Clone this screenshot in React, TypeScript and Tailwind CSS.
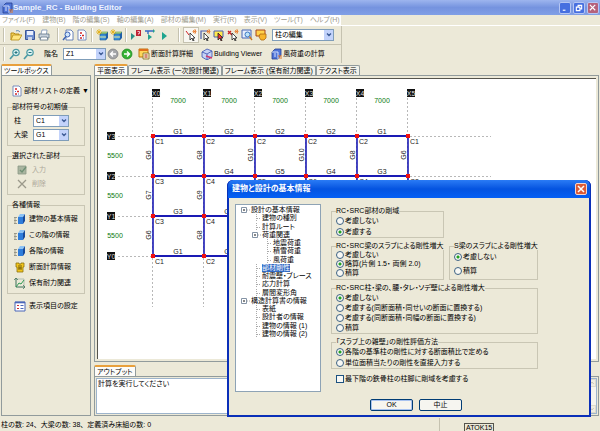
import React from "react";
import clsx from "clsx";

const menus = [
  "ファイル(F)",
  "建物(B)",
  "階の編集(S)",
  "軸の編集(A)",
  "部材の編集(M)",
  "実行(R)",
  "表示(V)",
  "ツール(T)",
  "ヘルプ(H)",
];

const tree = [
  { label: "設計の基本情報", depth: 0, open: true },
  { label: "建物の種別", depth: 1 },
  { label: "計算ルート", depth: 1 },
  { label: "荷重関連", depth: 1, open: true },
  { label: "地震荷重", depth: 2 },
  { label: "積雪荷重", depth: 2 },
  { label: "風荷重", depth: 2 },
  { label: "部材剛性", depth: 1, selected: true },
  { label: "耐震壁・ブレース", depth: 1 },
  { label: "応力計算", depth: 1 },
  { label: "層間変形角", depth: 1 },
  { label: "構造計算書の情報", depth: 0, open: true },
  { label: "表紙", depth: 1 },
  { label: "設計者の情報", depth: 1 },
  { label: "建物の情報 (1)", depth: 1 },
  { label: "建物の情報 (2)", depth: 1 },
];

const xs = [55, 106, 157, 208, 259, 310];
const ys = [57, 97, 137, 177];
const beams = [
  ["G1", "G2", "G2", "G2", "G1"],
  ["G3", "G4", "G5", "G4", "G3"],
  ["G3", "G4", "G5", "G4", "G3"],
  ["G1", "G2", "G2", "G2", "G1"],
];
const sideBeams = [
  ["G6", "G8", "G10", "G10", "G8", "G6"],
  ["G7", "G9", "G11", "G11", "G9", "G7"],
  ["G6", "G8", "G10", "G10", "G8", "G6"],
];
const columns = [
  ["C1", "C2", "C2", "C2", "C2", "C1"],
  ["C3", "C4", "C5", "C6", "C4", "C3"],
  ["C3", "C4", "C5", "C6", "C4", "C3"],
  ["C1", "C2", "C2", "C2", "C2", "C1"],
];

function Icon({ children }: { children: React.ReactNode }) {
  return (
    <svg viewBox="0 0 12 12" className="h-3 w-3 shrink-0" fill="none" aria-hidden="true">
      {children}
    </svg>
  );
}

const OpenIcon = () => (
  <Icon>
    <path d="M1 11V4h3l1 1h4v2" fill="#f4d35a" stroke="#b58a14" />
    <path d="M1 11l2-5h9l-3 5z" fill="#ffe680" stroke="#b58a14" strokeWidth=".8" />
    <path d="M6 2c2-1 3 0 4 1" stroke="#5a86b8" />
  </Icon>
);
const SaveIcon = () => (
  <Icon>
    <path d="M1.500 1.500h8l1 1v8h-9z" fill="#6f8fd0" stroke="#3b5698" />
    <path d="M3 2h6v4H3z" fill="#e8eefc" />
    <path d="M4 8h4v3H4z" fill="#cdd6e8" />
  </Icon>
);
const PrintIcon = () => (
  <Icon>
    <path d="M3 5l1-4h5l-.5 4" fill="#fff" stroke="#7690b4" strokeWidth=".8" />
    <path d="M1 5h10v4H1z" fill="#c8d2dc" stroke="#5f7487" strokeWidth=".8" />
    <path d="M3 8h6l1 3H2z" fill="#fff" stroke="#5f7487" strokeWidth=".8" />
  </Icon>
);
const PreviewIcon = () => (
  <Icon>
    <path d="M4 1h5l2 2v8H4z" fill="#fff" stroke="#4668ac" strokeWidth=".8" />
    <circle cx="5.500" cy="5.500" r="2.500" fill="#cfe5fb" stroke="#3b62b4" />
    <path d="M4 7.500L1 11" stroke="#3b62b4" strokeWidth="1.400" />
  </Icon>
);
const ListIcon = () => (
  <Icon>
    <path d="M2 1h6l2 2v8H2z" fill="#fff" stroke="#5c74b4" strokeWidth=".8" />
    <path d="M4 4h2M6 6.500h2M4 9h2" stroke="#d42a2a" strokeWidth="1.300" />
    <path d="M4 6.500h1M7 9h1" stroke="#4466c4" />
  </Icon>
);
const FloorsIcon = () => (
  <Icon>
    <path d="M4 5l2-2h6l-2 2z" fill="#b7e28a" stroke="#3b7a2a" strokeWidth=".5" />
    <path d="M4 5h6v6H4z" fill="#3b8fd8" stroke="#1d5a9c" strokeWidth=".6" />
    <path d="M10 5l2-2v6l-2 2z" fill="#1e5fa8" />
    <path d="M4 8h6" stroke="#e9f2a0" />
    <path d="M3 0v6M0 3h6M1 1l4 4M5 1L1 5" stroke="#e2ad10" strokeWidth=".8" />
  </Icon>
);
const RunStopIcon = () => (
  <Icon>
    <path d="M1 4l4 3-4 4z" fill="#2b8f86" />
    <path d="M6 1h5v6H6z" fill="#c02436" />
    <path d="M7.500 2.500h2v2h-1v1" stroke="#fff" strokeWidth=".7" />
  </Icon>
);
const RunStepIcon = () => (
  <Icon>
    <path d="M1 2h9M4 2v3" stroke="#3567c4" strokeWidth="1.400" />
    <path d="M9 0l2 2-2 2M4 5l4 3-4 3z" fill="#23a08e" />
  </Icon>
);
const RunIcon = () => (
  <Icon>
    <path d="M4 3l5 4-5 4z" fill="#1fa58f" />
  </Icon>
);
const Pointer = () => (
  <path d="M5 4v7l2-2 1 3h1l-1-3h2z" fill="#fff" stroke="#222" strokeWidth=".8" />
);
const Spark = () => <path d="M10 0v5M7.500 2.500h4M8 1l3 3M11 1L8 4" stroke="#e8792c" strokeWidth=".8" />;
const PickIcon = () => (
  <Icon>
    <path d="M1 2l3 4" stroke="#d02020" />
    <Pointer />
    <Spark />
  </Icon>
);
const PickFrameIcon = () => (
  <Icon>
    <path d="M2 10V2h7" stroke="#4a5fb0" strokeWidth="1.200" />
    <Pointer />
    <Spark />
  </Icon>
);
const PickBoxIcon = () => (
  <Icon>
    <path d="M1 2h9v6H1z" fill="#ffe94d" stroke="#4a5fb0" />
    <path d="M5 4v7l2-2 1 3h1l-1-3h2z" fill="#e33" stroke="#222" strokeWidth=".8" />
  </Icon>
);
const PickCrossIcon = () => (
  <Icon>
    <path d="M1 2l4 4M1 5l3-3" stroke="#c22" strokeWidth="1.300" />
    <Pointer />
    <Spark />
  </Icon>
);
const FrameZoomIcon = () => (
  <Icon>
    <path d="M1 1h9v8H1z" fill="#e8eefc" stroke="#4867b5" />
    <circle cx="6.500" cy="5.500" r="2.500" fill="#bfe3f7" stroke="#3b76c4" />
    <path d="M8.500 7.500L11 11" stroke="#c7781f" strokeWidth="1.300" />
  </Icon>
);
const FrameHandIcon = () => (
  <Icon>
    <path d="M1 1h9v6H1z" fill="#ffd24a" stroke="#a8451f" />
    <path d="M5 5h6v4l-2 2H6L4 8z" fill="#f7b52a" stroke="#b06a10" strokeWidth=".8" />
  </Icon>
);
const ZoomIcon = ({ plus }: { plus?: boolean }) => (
  <Icon>
    <circle cx="7" cy="4.500" r="3.200" fill="#dff3f3" stroke="#4b9aa4" strokeWidth="1.200" />
    <path d="M4.500 7L1 11" stroke="#4b9aa4" strokeWidth="1.600" />
    <path d={plus ? "M5.500 4.500h3M7 3v3" : "M5.500 4.500h3"} stroke="#24757f" />
  </Icon>
);
const BackIcon = () => (
  <Icon>
    <circle cx="6" cy="6" r="5" fill="#a4a6a8" stroke="#77797c" strokeWidth=".7" />
    <path d="M9 6H4M6 3.500L3.500 6 6 8.500" stroke="#fff" strokeWidth="1.400" />
  </Icon>
);
const NextIcon = () => (
  <Icon>
    <circle cx="6" cy="6" r="5" fill="#34b233" stroke="#17811d" strokeWidth=".7" />
    <path d="M3 6h5M6 3.500L8.500 6 6 8.500" stroke="#fff" strokeWidth="1.400" />
  </Icon>
);
const SectionIcon = () => (
  <Icon>
    <path d="M1 1h9v8H1z" fill="#ffd75a" stroke="#bd7512" />
    <path d="M1 2h9" stroke="#e0701b" strokeWidth="2" />
    <path d="M5 5h6v6H5z" fill="#f6efc8" stroke="#7e6a20" strokeWidth=".8" />
    <path d="M6.500 7h3M6.500 9h3" stroke="#b62626" />
  </Icon>
);
const ViewerIcon = () => (
  <Icon>
    <path d="M1 4l5-3 5 2v6l-5 3-5-3z" fill="#c7d3f5" stroke="#3a51b0" strokeWidth=".8" />
    <path d="M1 4l5 2 5-3M6 6v6" stroke="#3a51b0" strokeWidth=".8" />
    <path d="M5 8l6 2" stroke="#cf3a6c" strokeWidth="1.400" />
  </Icon>
);
const WindIcon = () => (
  <Icon>
    <path d="M2 4l3-3h6v6l-3 4H2z" fill="#4f74d8" stroke="#26408f" strokeWidth=".8" />
    <path d="M2 4h6v7M4 6h2M4 8h2" stroke="#e4ecff" strokeWidth=".9" />
    <path d="M8 8h4M9 10h3" stroke="#e0762a" />
  </Icon>
);
const BuildingIcon = () => (
  <Icon>
    <path d="M4 4l2-3h5L9 4z" fill="#8cc2f5" />
    <path d="M4 4h5v7H4z" fill="#2f7ddb" />
    <path d="M9 4l2-3v7l-2 3z" fill="#164a9c" />
    <path d="M1 4v7M0 4.500h3M0 10.500h3M0 7.500h3" stroke="#8d8a7c" strokeWidth=".8" />
  </Icon>
);
const BeamIcon = () => (
  <Icon>
    <path d="M2 2h3v1h2V2h3v4H9v5H3V6H2z" fill="#f2c51d" stroke="#8d7210" strokeWidth=".8" />
    <path d="M5 4v5M7 4v5M4.500 7h3" stroke="#5c4a08" strokeWidth=".8" />
  </Icon>
);
const ChartIcon = () => (
  <Icon>
    <path d="M2 1v9h9" stroke="#3b6f58" />
    <path d="M2 2h8v8" stroke="#9bb0a4" strokeWidth=".7" />
    <path d="M2 10l3-4 2 1 3-4" stroke="#2f9b54" />
    <path d="M0 3l2-2 2 2M9 8l2 2-2 2" stroke="#3b6f58" strokeWidth=".7" />
  </Icon>
);
const SettingIcon = () => (
  <Icon>
    <path d="M1 2h10v9H1z" fill="#fff" stroke="#4a66b8" />
    <path d="M1 2.500h10" stroke="#4a66b8" strokeWidth="1.600" />
    <path d="M3 5.500h2M3 8.500h2" stroke="#d03030" strokeWidth="1.200" />
    <path d="M6.500 5.500h3M6.500 8.500h3" stroke="#4a66b8" />
  </Icon>
);
const EnterIcon = () => (
  <Icon>
    <path d="M2 2h8v8H2z" fill="#a9b5a0" stroke="#8c9886" strokeWidth=".8" />
    <path d="M4 6l2 2 4-5" stroke="#6f8f74" strokeWidth="1.300" />
  </Icon>
);
const DeleteIcon = () => (
  <Icon>
    <path d="M2 2l8 8M10 2l-8 8" stroke="#9b998b" strokeWidth="1.300" />
  </Icon>
);

function Combo({ label, value, className }: { label: string; value: string; className?: string }) {
  return (
    <div className={clsx("relative h-3 border border-[#7f9db9] bg-white", className)}>
      <select
        aria-label={label}
        className="block h-full w-full appearance-none pl-0.5 text-[7px] leading-[10px] outline-none"
      >
        <option>{value}</option>
      </select>
      <span className="pointer-events-none absolute inset-y-0 right-0 flex w-[9px] items-center justify-center bg-[#c3d3fb]">
        <svg viewBox="0 0 6 4" className="h-1 w-1.5" fill="none">
          <path d="M1 .5l2 2 2-2" stroke="#3c5a94" strokeWidth="1.300" />
        </svg>
      </span>
    </div>
  );
}

function Separator() {
  return <span className="h-3.5 w-0.5 shrink-0 border-l border-[#c5c2b0] bg-white" />;
}

function ToolButton({ label, children, active }: { label: string; children: React.ReactNode; active?: boolean }) {
  return (
    <button
      aria-label={label}
      className={clsx(
        "flex h-3.5 w-3.5 items-center justify-center",
        active && "bg-[#f8f7f1] outline outline-[#c5c2b0]"
      )}
    >
      {children}
    </button>
  );
}

function TextButton({ icon, children }: { icon: React.ReactNode; children: React.ReactNode }) {
  return (
    <button className="flex items-center gap-px whitespace-nowrap">
      {icon}
      {children}
    </button>
  );
}

function Tab({ active, children }: { active?: boolean; children: React.ReactNode }) {
  return (
    <button
      role="tab"
      aria-selected={!!active}
      className={clsx(
        "whitespace-nowrap rounded-t-xs border border-b-0 border-[#919b9c] px-0.5 leading-[9px]",
        active ? "h-[11px] border-t-2 border-t-[#e8a03c] bg-[#fcfcfa]" : "h-[10px] bg-[#f3f2ea]"
      )}
    >
      {children}
    </button>
  );
}

function Group({
  title,
  className,
  children,
}: {
  title: string;
  className?: string;
  children: React.ReactNode;
}) {
  return (
    <fieldset className="min-w-0 border border-[#c9c6b4]">
      <legend className="ml-1 whitespace-nowrap leading-[8px]">{title}</legend>
      <div className={clsx("flex flex-col", className)}>{children}</div>
    </fieldset>
  );
}

function Radio({ name, checked, children }: { name: string; checked?: boolean; children: React.ReactNode }) {
  return (
    <label className="flex h-[9px] items-center gap-px whitespace-nowrap leading-[9px]">
      <input
        type="radio"
        name={name}
        defaultChecked={checked}
        className="h-2 w-2 shrink-0 appearance-none rounded-full border border-[#3d6284] bg-[#f8f8f4] checked:bg-[radial-gradient(circle,#21a121_1px,#f8f8f4_2px)]"
      />
      {children}
    </label>
  );
}

function Plan() {
  return (
    <svg className="block h-full w-full text-[7px]" fontFamily="'Liberation Sans', sans-serif">
      <g stroke="#b8b8b8" strokeDasharray="2 2">
        {xs.map((x) => (
          <path key={x} d={`M${x - 0.5} 19V228`} />
        ))}
        {ys.map((y) => (
          <path key={y} d={`M20 ${y + 0.5}H393`} />
        ))}
      </g>
      <g stroke="#1a1ab4">
        {xs.map((x) => (
          <path key={x} d={`M${x} 57V177`} strokeWidth="1.600" />
        ))}
        {ys.map((y) => (
          <path key={y} d={`M55 ${y}H310`} strokeWidth="2" />
        ))}
      </g>
      {xs.map((x, i) => (
        <g key={x}>
          <rect x={x - 1} y="10" width="8" height="8" fill="#111" />
          <text x={x + 3} y="17" textAnchor="middle" fill="#ddd">
            X{i}
          </text>
          {i < 5 && (
            <text x={x + 25} y="24" textAnchor="middle" fill="#0a7a0a">
              7000
            </text>
          )}
        </g>
      ))}
      {ys.map((y, r) => (
        <g key={y}>
          <rect x="9" y={y - 4} width="8" height="8" fill="#111" />
          <text x="13" y={y + 3} textAnchor="middle" fill="#ddd">
            Y{3 - r}
          </text>
          {r < 3 && (
            <text x="17" y={y + 22} textAnchor="middle" fill="#0a7a0a">
              5500
            </text>
          )}
          {beams[r].map((b, i) => (
            <text key={i} x={xs[i] + 25} y={y - 2} textAnchor="middle" fill="#222">
              {b}
            </text>
          ))}
          {columns[r].map((c, i) => (
            <text key={i} x={xs[i] + 2} y={y + 8} fill="#222">
              {c}
            </text>
          ))}
          {r < 3 &&
            sideBeams[r].map((b, i) => (
              <text
                key={i}
                transform={`translate(${xs[i] - 2} ${y + 19}) rotate(-90)`}
                textAnchor="middle"
                fill="#222"
              >
                {b}
              </text>
            ))}
          {xs.map((x) => (
            <rect key={x} x={x - 2} y={y - 2} width="4" height="4" fill="#f01010" />
          ))}
        </g>
      ))}
    </svg>
  );
}

function Toolbox() {
  return (
    <aside className="flex w-[90px] shrink-0 flex-col">
      <div className="flex items-end">
        <Tab active>ツールボックス</Tab>
      </div>
      <div className="flex flex-1 flex-col gap-1.5 border border-[#919b9c] px-[5px] pt-[9px]">
        <button className="flex h-3 items-center gap-px whitespace-nowrap pl-1 [font-feature-settings:normal]">
          <ListIcon />
          部材リストの定義 ▼
        </button>
        <Group title="部材符号の初期値" className="gap-0.5 px-1.5 py-1">
          <div className="flex items-center">
            <span className="w-[19px]">柱</span>
            <Combo label="柱" value="C1" className="w-9" />
          </div>
          <div className="flex items-center">
            <span className="w-[19px]">大梁</span>
            <Combo label="大梁" value="G1" className="w-9" />
          </div>
        </Group>
        <Group title="選択された部材" className="gap-0.5 px-2 py-1 text-[#aca899]">
          <button disabled className="flex h-3 items-center gap-1">
            <EnterIcon />
            入力
          </button>
          <button disabled className="flex h-3 items-center gap-1">
            <DeleteIcon />
            削除
          </button>
        </Group>
        <Group title="各種情報" className="gap-1 px-1.5 py-1">
          {[
            ["建物の基本情報", <BuildingIcon />],
            ["この階の情報", <BuildingIcon />],
            ["各階の情報", <BuildingIcon />],
            ["断面計算情報", <BeamIcon />],
            ["保有耐力関連", <ChartIcon />],
          ].map(([label, icon]) => (
            <button key={label as string} className="flex h-3 items-center gap-[3px] whitespace-nowrap">
              {icon}
              {label}
            </button>
          ))}
        </Group>
        <button className="flex h-3 items-center gap-[3px] whitespace-nowrap pl-[7px]">
          <SettingIcon />
          表示項目の設定
        </button>
      </div>
    </aside>
  );
}

function Dialog() {
  return (
    <div
      role="dialog"
      aria-label="建物と設計の基本情報"
      className="absolute left-[227px] top-[180px] w-[364px] rounded-t-md bg-[#0a2fb8] px-0.5 pb-0.5"
    >
      <div className="-mx-0.5 flex h-[18px] items-center justify-between rounded-t-md border-x border-[#0831b8] bg-linear-to-b from-[#2a7bf5] via-[#0453e0] to-[#0560f5] pl-1 pr-[3px] text-[8px] font-bold text-white">
        建物と設計の基本情報
        <button
          aria-label="閉じる"
          className="flex h-3 w-3 items-center justify-center rounded-xs border border-[#f5d5cc] bg-[#dc5a36]"
        >
          <svg viewBox="0 0 8 8" className="h-2 w-2">
            <path d="M1 1l6 6M7 1L1 7" stroke="#fff" strokeWidth="1.500" />
          </svg>
        </button>
      </div>
      <div className="bg-[#ece9d8] px-1.5 pb-1 pt-1.5">
        <div className="flex gap-2.5">
          <div className="h-[188px] w-[86px] border border-[#8ea3b5] bg-white pt-px">
            <ul className="flex h-[132px] flex-col justify-between">
              {tree.map((item) => (
                <li
                  key={item.label}
                  className={clsx(
                    "flex h-2 items-center whitespace-nowrap leading-[8px]",
                    item.depth === 0 && "pl-[5px]",
                    item.depth === 1 && (item.open ? "pl-4" : "pl-5"),
                    item.depth === 2 && "pl-[31px]"
                  )}
                >
                  {item.open ? (
                    <svg viewBox="0 0 10 8" className="h-2 w-2.5 shrink-0" fill="none">
                      <path d="M.5 1.500h5v5h-5z" fill="#fff" stroke="#8493a5" />
                      <path d="M2 4h2" stroke="#111" />
                      <path d="M6 4h3" stroke="#aaa" strokeDasharray="1 1" />
                    </svg>
                  ) : (
                    <svg viewBox="0 0 6 8" className="h-2 w-1.5 shrink-0" fill="none">
                      <path d="M.5 0v8M1 4.500h4" stroke="#aaa" strokeDasharray="1 1" />
                    </svg>
                  )}
                  <span className={clsx(item.selected && "bg-[#316ac5] text-white")}>{item.label}</span>
                </li>
              ))}
            </ul>
          </div>

          <form className="flex w-[207px] flex-col gap-1 pt-[3px]">
            <div className="grid w-[113px]">
              <Group title="RC・SRC部材の剛域" className="gap-0.5 px-1 py-px">
                <Radio name="zone">考慮しない</Radio>
                <Radio name="zone" checked>考慮する</Radio>
              </Group>
            </div>
            <div className="grid grid-cols-[113px_1fr] gap-[5px]">
              <Group title="RC・SRC梁のスラブによる剛性増大" className="px-1 pb-0.5">
                <Radio name="rcslab">考慮しない</Radio>
                <Radio name="rcslab" checked>略算(片側 1.5・ 両側 2.0)</Radio>
                <Radio name="rcslab">積算</Radio>
              </Group>
              <Group title="S梁のスラブによる剛性増大" className="gap-[5px] px-1 pt-0.5">
                <Radio name="sslab" checked>考慮しない</Radio>
                <Radio name="sslab">積算</Radio>
              </Group>
            </div>
            <Group title="RC・SRC柱・梁の、腰・タレ・ソデ壁による剛性増大" className="gap-px px-1 py-px">
              <Radio name="wall" checked>考慮しない</Radio>
              <Radio name="wall">考慮する(同断面積・同せいの断面に置換する)</Radio>
              <Radio name="wall">考慮する(同断面積・同幅の断面に置換する)</Radio>
              <Radio name="wall">積算</Radio>
            </Group>
            <Group title="「スラブ上の雑壁」の剛性評価方法" className="gap-0.5 px-1 py-px">
              <Radio name="method" checked>各階の基準柱の剛性に対する断面積比で定める</Radio>
              <Radio name="method">単位面積当たりの剛性を直接入力する</Radio>
            </Group>
            <label className="flex items-center gap-px whitespace-nowrap pl-[5px] pt-px">
              <input
                type="checkbox"
                className="h-2 w-2 appearance-none border border-[#1c5180] bg-[#f8f8f4] checked:bg-[#21a121]"
              />
              最下階の鉄骨柱の柱脚に剛域を考慮する
            </label>
          </form>
        </div>
        <div className="mt-[7px] flex justify-center gap-1.5 pl-3.5">
          <button className="h-3 w-[43px] rounded-xs border border-[#003c74] bg-[#f6f5f0] leading-[10px] shadow-[inset_0_0_0_1px_#a9c3f0]">
            OK
          </button>
          <button className="h-3 w-[43px] rounded-xs border border-[#003c74] bg-[#f6f5f0] leading-[10px]">
            中止
          </button>
        </div>
      </div>
    </div>
  );
}

export default function App() {
  return (
    <div className="relative flex h-screen flex-col overflow-hidden bg-[#ece9d8] font-['Liberation_Sans','Noto_Sans_CJK_JP',sans-serif] text-[7px] leading-[10px] text-black [font-feature-settings:'palt']">
      {/* Title bar */}
      <header className="flex h-[15px] shrink-0 items-center justify-between bg-linear-to-b from-[#9db5ee] via-[#7593df] to-[#809fe6] px-px">
        <h1 className="flex items-center text-[8px] font-bold text-[#eef3ff]">
          <WindIcon />
          Sample_RC - Building Editor
        </h1>
        <div className="flex gap-0.5">
          {[
            ["最小化", "M2 7h3"],
            ["元に戻す", "M3.500 3V1.500h4v4H6M1.500 3.500h4v4h-4z"],
            ["閉じる", "M1 1l6 6M7 1L1 7"],
          ].map(([label, d], i) => (
            <button
              key={label}
              aria-label={label}
              className={clsx(
                "flex h-3 w-3 items-center justify-center rounded-xs border border-[#b5c6f3]",
                i === 2 ? "bg-[#b5627c]" : "bg-[#466fe0]"
              )}
            >
              <svg viewBox="0 0 9 9" className="h-2 w-2" fill="none">
                <path d={d} stroke="#fff" strokeWidth="1.300" />
              </svg>
            </button>
          ))}
        </div>
      </header>

      {/* Menu */}
      <nav className="flex h-[11px] shrink-0 border-b border-white">
        <div className="flex w-[341px] items-center gap-[7px] bg-white pl-0.5 text-[#a09d90]">
          {menus.map((m) => (
            <button key={m} className="whitespace-nowrap">
              {m}
            </button>
          ))}
        </div>
      </nav>

      {/* Toolbars */}
      <div className="flex h-[19px] w-[342px] shrink-0 items-center border-b border-r border-[#c5c2b0] pl-[3px]">
        <Separator />
        <div className="flex pl-1">
          <ToolButton label="開く"><OpenIcon /></ToolButton>
          <ToolButton label="保存"><SaveIcon /></ToolButton>
          <ToolButton label="印刷"><PrintIcon /></ToolButton>
        </div>
        <div className="flex items-center gap-0.5 pl-1.5">
          <Separator />
          <div className="flex">
            <ToolButton label="プレビュー"><PreviewIcon /></ToolButton>
            <ToolButton label="一覧"><ListIcon /></ToolButton>
          </div>
          <Separator />
          <div className="flex">
            <ToolButton label="階の追加"><FloorsIcon /></ToolButton>
            <ToolButton label="階の複製"><FloorsIcon /></ToolButton>
          </div>
          <Separator />
          <div className="flex">
            <ToolButton label="停止まで実行"><RunStopIcon /></ToolButton>
            <ToolButton label="ステップ実行"><RunStepIcon /></ToolButton>
            <ToolButton label="計算の実行"><RunIcon /></ToolButton>
          </div>
        </div>
        <div className="flex items-center gap-1 pl-[7px]">
          <Separator />
          <div className="flex">
            <ToolButton label="選択" active><PickIcon /></ToolButton>
            <ToolButton label="枠選択"><PickFrameIcon /></ToolButton>
            <ToolButton label="範囲選択"><PickBoxIcon /></ToolButton>
            <ToolButton label="交差選択"><PickCrossIcon /></ToolButton>
            <ToolButton label="枠拡大"><FrameZoomIcon /></ToolButton>
            <ToolButton label="移動"><FrameHandIcon /></ToolButton>
          </div>
          <Combo label="編集の対象" value="柱の編集" className="w-[62px]" />
        </div>
      </div>
      <div className="flex h-[18px] w-[342px] shrink-0 items-center border-r border-[#c5c2b0] pl-[3px]">
        <Separator />
        <div className="flex pl-[3px]">
          <ToolButton label="拡大"><ZoomIcon plus /></ToolButton>
          <ToolButton label="縮小"><ZoomIcon /></ToolButton>
        </div>
        <span className="w-[27px] whitespace-nowrap pl-2">階名</span>
        <Combo label="階名" value="Z1" className="w-[43px]" />
        <div className="flex">
          <ToolButton label="前の階"><BackIcon /></ToolButton>
          <ToolButton label="次の階"><NextIcon /></ToolButton>
        </div>
        <div className="flex gap-2 pl-1">
          <TextButton icon={<SectionIcon />}>断面計算詳細</TextButton>
          <TextButton icon={<ViewerIcon />}>Building Viewer</TextButton>
          <TextButton icon={<WindIcon />}>風荷重の計算</TextButton>
        </div>
      </div>

      {/* Work area */}
      <div className="flex min-h-0 flex-1 gap-[3px] px-px pt-px">
        <Toolbox />
        <main className="flex min-w-0 flex-1 flex-col gap-[3px]">
          <section className="flex min-h-0 flex-1 flex-col">
            <div role="tablist" className="flex items-end">
              <Tab active>平面表示</Tab>
              <Tab>フレーム表示 (一次設計関連)</Tab>
              <Tab>フレーム表示 (保有耐力関連)</Tab>
              <Tab>テクスト表示</Tab>
            </div>
            <div className="min-h-0 flex-1 border border-[#919b9c] p-0.5">
              <div className="h-full overflow-hidden border-l border-t border-[#55544c] bg-white">
                <Plan />
              </div>
            </div>
          </section>
          <section className="flex h-[51px] shrink-0 flex-col">
            <div className="flex items-end">
              <Tab active>アウトプット</Tab>
            </div>
            <div className="flex-1 border border-[#919b9c] p-px">
              <div className="flex h-full justify-between border border-[#9db4cc] bg-white pl-px">
                <p>計算を実行してください</p>
                <div className="flex w-2 flex-col justify-between bg-[#f5f4ee]">
                  {["M2 5l2-2 2 2", "M2 3l2 2 2-2"].map((d) => (
                    <svg key={d} viewBox="0 0 8 8" className="h-2 w-2 border border-[#dddacb] bg-[#efede2]" fill="none">
                      <path d={d} stroke="#b9b6a6" strokeWidth="1.300" />
                    </svg>
                  ))}
                </div>
              </div>
            </div>
          </section>
        </main>
      </div>

      {/* Status bar */}
      <footer className="flex h-[15px] shrink-0 items-end overflow-hidden">
        <p className="h-[13px] w-[440px] border-r border-[#c5c2b0] pl-px leading-[13px] [font-feature-settings:normal]">
          柱の数: 24、大梁の数: 38、定義済み床組の数: 0
        </p>
        <span className="ml-6 h-2 border border-b-0 border-[#55544c] px-px leading-[8px]">ATOK15</span>
      </footer>

      <Dialog />
    </div>
  );
}
